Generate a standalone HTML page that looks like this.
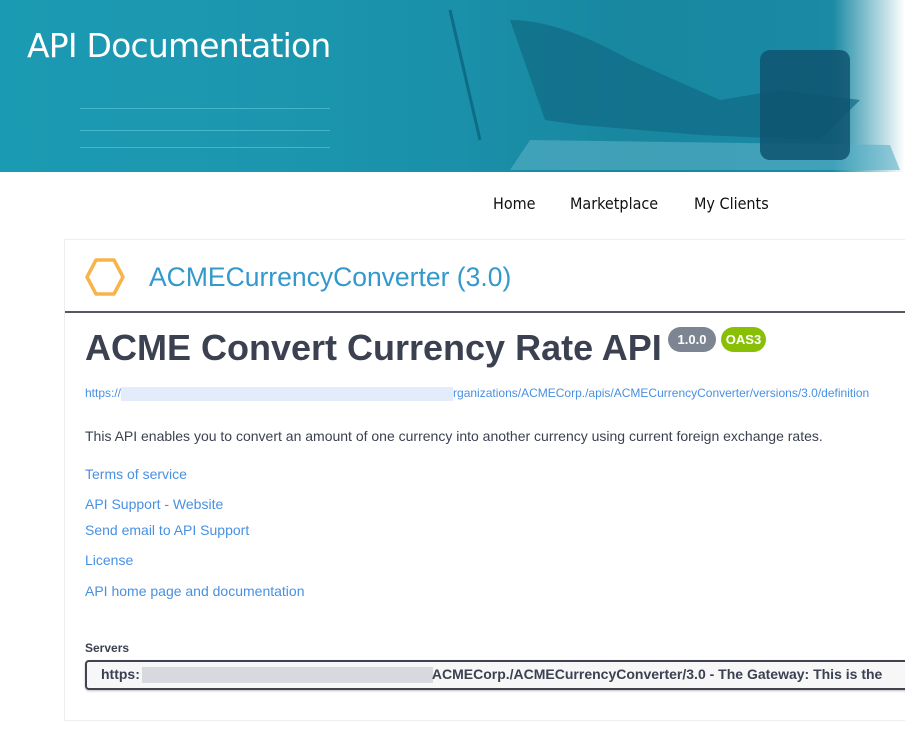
<!DOCTYPE html>
<html><head><meta charset="utf-8"><style>
body{margin:0;width:905px;height:732px;overflow:hidden;background:#fff;font-family:"Liberation Sans",sans-serif;position:relative}
.banner{position:absolute;left:0;top:0;width:905px;height:172px;background:linear-gradient(90deg,#1b9ab3 0%,#1c97b0 25%,#1a90aa 50%,#18879f 70%,#1a8aa5 92%,#fff 100%);overflow:hidden}
.banner h1{position:absolute;left:27px;top:26px;margin:0;font-weight:normal;font-size:33px;color:#fff;font-family:"DejaVu Sans","Liberation Sans",sans-serif;letter-spacing:-0.8px}
.line{position:absolute;height:1px;background:rgba(120,220,240,.45)}
.nav{position:absolute;top:194px;font-size:16px;color:#111;font-family:"DejaVu Sans Condensed","Liberation Sans",sans-serif}
.card{position:absolute;left:64px;top:239px;width:860px;height:480px;border:1px solid #eee;border-right:none;background:#fff}
.hdr{height:71px;border-bottom:2px solid #55585e}
.t{position:absolute;left:85px;color:#4990e2;font-size:14px}
</style></head><body>
<div class="banner">
<div class="line" style="left:80px;top:108px;width:250px"></div>
<div class="line" style="left:80px;top:130px;width:250px"></div>
<div class="line" style="left:80px;top:147px;width:250px"></div>
<svg style="position:absolute;left:300px;top:0" width="605" height="172"><path d="M230 140 L590 145 L600 170 L210 170 Z" fill="#5ab0c6" opacity=".6"/><path d="M150 10 L180 140" stroke="#0e6d86" stroke-width="3"/><path d="M210 20 Q260 20 330 60 L420 100 L480 90 L560 100 L520 140 L400 135 L280 125 L245 120 Z" fill="#116a85" opacity=".7"/><rect x="460" y="50" width="90" height="110" rx="10" fill="#0f5470" opacity=".85"/></svg>
<h1>API Documentation</h1>
</div>
<div class="nav" style="left:493px">Home</div>
<div class="nav" style="left:570px">Marketplace</div>
<div class="nav" style="left:694px">My Clients</div>
<div class="card"><div class="hdr"></div></div>
<svg style="position:absolute;left:84px;top:257px" width="42" height="40"><polygon points="12,3 30,3 39,20 30,37 12,37 3,20" fill="none" stroke="#f8b44a" stroke-width="3.5" stroke-linejoin="round"/></svg>
<div style="position:absolute;left:149px;top:262px;font-size:26.5px;color:#3399cc">ACMECurrencyConverter (3.0)</div>
<div style="position:absolute;left:85px;top:327px;font-size:36px;font-weight:bold;color:#3b4151">ACME Convert Currency Rate API</div>
<div style="position:absolute;left:668px;top:327px;width:48px;height:25px;border-radius:13px;background:#7d8492;color:#fff;font-weight:bold;font-size:13px;text-align:center;line-height:25px">1.0.0</div>
<div style="position:absolute;left:721px;top:327px;width:45px;height:25px;border-radius:13px;background:#89bf04;color:#fff;font-weight:bold;font-size:13px;text-align:center;line-height:25px">OAS3</div>
<div class="t" style="top:386px;font-size:12px">https://<span style="display:inline-block;width:332px;height:14px;background:#e3ecfa;vertical-align:middle"></span>rganizations/ACMECorp./apis/ACMECurrencyConverter/versions/3.0/definition</div>
<div class="t" style="top:428px;color:#3b4151">This API enables you to convert an amount of one currency into another currency using current foreign exchange rates.</div>
<div class="t" style="top:466px">Terms of service</div>
<div class="t" style="top:496px">API Support - Website</div>
<div class="t" style="top:522px">Send email to API Support</div>
<div class="t" style="top:552px">License</div>
<div class="t" style="top:583px">API home page and documentation</div>
<div class="t" style="top:641px;font-size:12px;font-weight:bold;color:#3b4151">Servers</div>
<div style="position:absolute;left:85px;top:660px;width:830px;height:26px;border:2px solid #41444e;border-radius:4px;background:#f7f7f7;box-shadow:0 1px 2px rgba(0,0,0,.25)"></div>
<div style="position:absolute;left:101px;top:666px;font-size:14px;font-weight:bold;color:#3b4151;white-space:nowrap">https:<span style="display:inline-block;width:291px;height:16px;background:#d8d9de;vertical-align:middle;margin:0 -1px 0 2px"></span>ACMECorp./ACMECurrencyConverter/3.0 - The Gateway: This is the</div>
</body></html>
